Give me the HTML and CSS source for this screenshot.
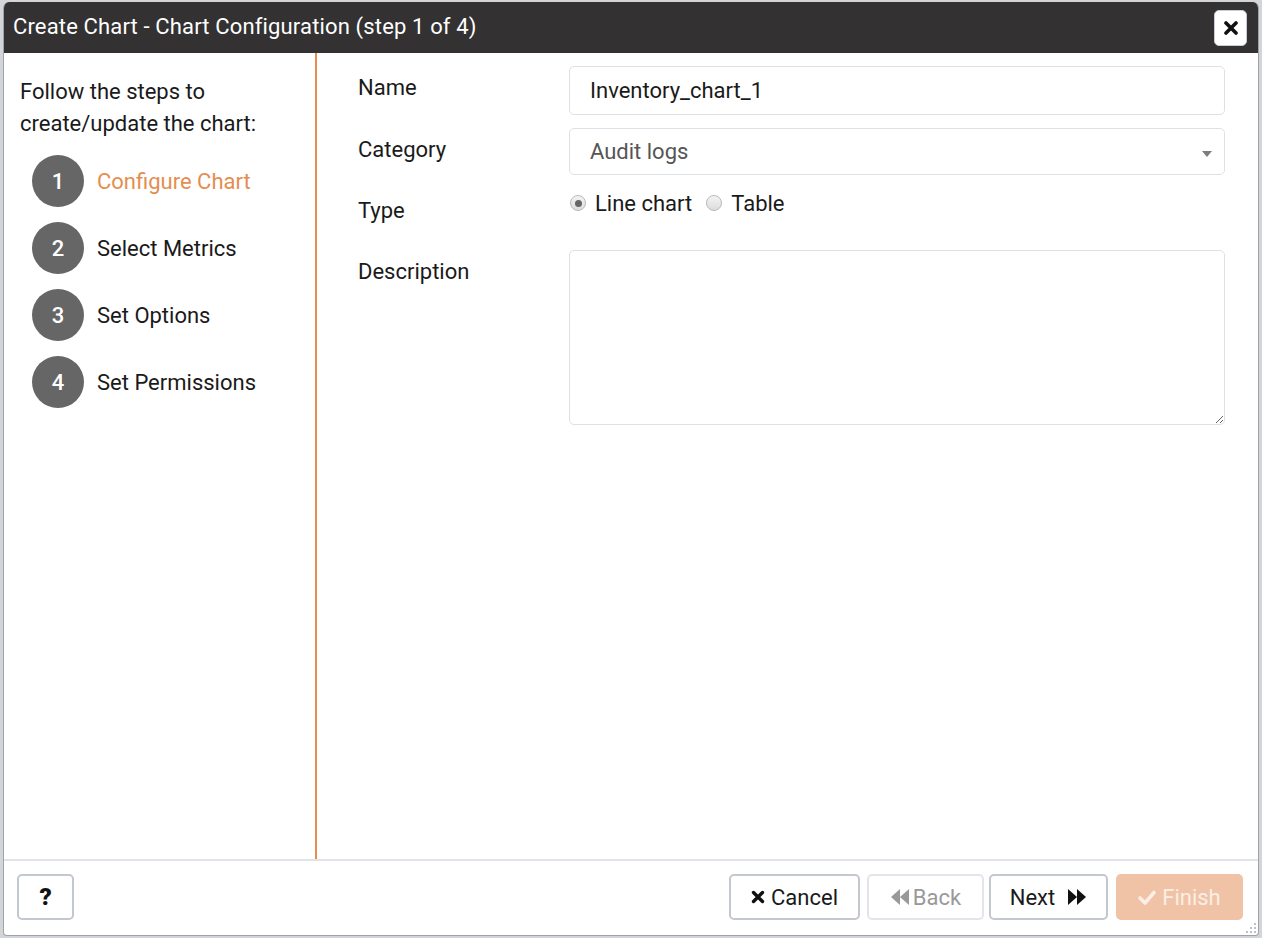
FILE: index.html
```html
<!DOCTYPE html>
<html>
<head>
<meta charset="utf-8">
<title>Create Chart</title>
<link rel="stylesheet" href="styles.css">
</head>
<body>
<div class="dialog">
  <div class="dlg-header">
    <span class="dlg-title">Create Chart - Chart Configuration (step 1 of 4)</span>
    <button class="close-btn" aria-label="Close">
      <svg width="14" height="14" viewBox="0 0 14 14"><path d="M2 2 L12 12 M12 2 L2 12" stroke="#111" stroke-width="3.6" stroke-linecap="round"/></svg>
    </button>
  </div>
  <div class="dlg-main">
    <div class="steps-panel">
      <p class="steps-intro">Follow the steps to create/update the chart:</p>
      <ul class="steps">
        <li class="step active"><span class="step-num">1</span><span class="step-label">Configure Chart</span></li>
        <li class="step"><span class="step-num">2</span><span class="step-label">Select Metrics</span></li>
        <li class="step"><span class="step-num">3</span><span class="step-label">Set Options</span></li>
        <li class="step"><span class="step-num">4</span><span class="step-label">Set Permissions</span></li>
      </ul>
    </div>
    <div class="form-panel">
      <div class="form-grid">
        <label class="f-label">Name</label>
        <div class="f-ctrl"><div class="input">Inventory_chart_1</div></div>

        <label class="f-label">Category</label>
        <div class="f-ctrl"><div class="input select"><span>Audit logs</span><span class="caret"></span></div></div>

        <label class="f-label">Type</label>
        <div class="f-ctrl radios">
          <span class="radio checked"></span><span class="radio-text">Line chart</span>
          <span class="radio"></span><span class="radio-text">Table</span>
        </div>

        <label class="f-label">Description</label>
        <div class="f-ctrl"><textarea class="textarea"></textarea></div>
      </div>
    </div>
  </div>
  <div class="dlg-footer">
    <button class="btn btn-help">?</button>
    <div class="footer-right">
      <button class="btn btn-cancel">
        <svg width="14" height="14" viewBox="0 0 14 14"><path d="M2.5 2.5 L11.5 11.5 M11.5 2.5 L2.5 11.5" stroke="#111" stroke-width="3.4" stroke-linecap="round"/></svg>
        Cancel</button>
      <button class="btn btn-back">
        <svg width="20" height="18" viewBox="0 0 20 18"><path d="M10 1 L1 9 L10 17 Z M19 1 L10 9 L19 17 Z" fill="#999"/></svg>
        Back</button>
      <button class="btn btn-next">Next
        <svg width="20" height="18" viewBox="0 0 20 18"><path d="M1 1 L10 9 L1 17 Z M10 1 L19 9 L10 17 Z" fill="#111"/></svg>
      </button>
      <button class="btn btn-finish">
        <svg width="18" height="15" viewBox="0 0 18 15"><path d="M2 8 L7 13 L16 2.5" stroke="#fbeee5" stroke-width="3.6" fill="none" stroke-linecap="round" stroke-linejoin="round"/></svg>
        Finish</button>
    </div>
    <svg class="grip" width="12" height="12" viewBox="0 0 12 12">
      <g fill="#a9acb2"><circle cx="10" cy="2" r="1"/><circle cx="6" cy="6" r="1"/><circle cx="10" cy="6" r="1"/><circle cx="2" cy="10" r="1"/><circle cx="6" cy="10" r="1"/><circle cx="10" cy="10" r="1"/></g>
    </svg>
  </div>
</div>
</body>
</html>
```
FILE: styles.css
```css
* { box-sizing: border-box; }
html, body { margin: 0; padding: 0; }
body {
  width: 1262px;
  height: 938px;
  background: #d3d5d9;
  font-family: Roboto, "Liberation Sans", Arial, sans-serif;
  color: #1a1a1a;
  overflow: hidden;
}
.dialog {
  position: relative;
  margin: 2px 0 0 3px;
  width: 1256px;
  height: 934px;
  background: #fff;
  border: 1px solid #9ea2a9;
  border-top: none;
  border-radius: 6px 6px 4px 4px;
  display: flex;
  flex-direction: column;
  overflow: hidden;
}
.dlg-header {
  height: 51px;
  flex: 0 0 51px;
  background: #333132;
  display: flex;
  align-items: center;
  justify-content: space-between;
  padding: 0 11px 0 9px;
}
.dlg-title {
  color: #fff;
  font-size: 22px;
  letter-spacing: 0.15px;
  line-height: 28px;
  margin-top: -2px;
}
.close-btn {
  width: 33px;
  height: 36px;
  background: #fff;
  border: 1px solid #c8ccd4;
  border-radius: 5px;
  padding: 0;
  display: flex;
  align-items: center;
  justify-content: center;
  margin-top: 1px;
}
.dlg-main {
  flex: 1;
  display: flex;
  min-height: 0;
}
.steps-panel {
  width: 313px;
  flex: 0 0 313px;
  border-right: 2px solid #e58e4f;
  padding: 23px 0 0 16px;
}
.steps-intro {
  margin: 0;
  font-size: 22px;
  line-height: 32px;
  color: #1a1a1a;
}
.steps {
  list-style: none;
  margin: 15px 0 0 12px;
  padding: 0;
  display: flex;
  flex-direction: column;
  gap: 15px;
}
.step {
  display: flex;
  align-items: center;
  gap: 13px;
  height: 52px;
}
.step-num {
  width: 52px;
  height: 52px;
  border-radius: 50%;
  background: #666;
  color: #fff;
  font-size: 22px;
  font-weight: 500;
  display: flex;
  align-items: center;
  justify-content: center;
}
.step-label {
  font-size: 22px;
  color: #1a1a1a;
}
.step.active .step-label { color: #e58e4f; }
.form-panel {
  flex: 1;
  padding: 13px 33px 0 41px;
}
.form-grid {
  display: grid;
  grid-template-columns: 211px 1fr;
  grid-template-rows: 49px 48px 48px 175px;
  row-gap: 13px;
}
.f-label {
  font-size: 22px;
  line-height: 28px;
  padding-top: 8px;
  color: #1a1a1a;
}
.input {
  height: 49px;
  border: 1px solid #dde0e6;
  border-radius: 5px;
  padding: 0 20px 0 20px;
  font-size: 22px;
  display: flex;
  align-items: center;
  color: #1a1a1a;
}
.select { justify-content: space-between; color: #555; height: 47px; }
.caret {
  width: 0;
  height: 0;
  border-left: 5.5px solid transparent;
  border-right: 5.5px solid transparent;
  border-top: 6px solid #7d7d7d;
  margin-right: -8px;
  margin-top: 4px;
}
.radios {
  display: flex;
  align-items: center;
  height: 28px;
  font-size: 22px;
}
.radio {
  width: 16px;
  height: 16px;
  border-radius: 50%;
  border: 1px solid #b9b9b9;
  background: linear-gradient(#f4f4f4, #dcdcdc);
  margin: 0 9px 0 1px;
  position: relative;
  flex: 0 0 16px;
}
.radio.checked::after {
  content: "";
  position: absolute;
  left: 3.5px;
  top: 3.5px;
  width: 7px;
  height: 7px;
  border-radius: 50%;
  background: #666;
}
.radio-text { margin-right: 13px; color: #1a1a1a; }
.textarea {
  display: block;
  width: 100%;
  height: 175px;
  border: 1px solid #dde0e6;
  border-radius: 5px;
  font-family: inherit;
  font-size: 22px;
  padding: 10px 20px;
  margin: 0;
  outline: none;
}
.dlg-footer {
  position: relative;
  flex: 0 0 76px;
  border-top: 2px solid #e1e3e8;
  display: flex;
  justify-content: space-between;
  align-items: flex-start;
  padding: 13px 15px 0 13px;
}
.footer-right {
  display: flex;
  gap: 7px;
}
.btn {
  height: 46px;
  border: 2px solid #c3c7d0;
  border-radius: 5px;
  background: #fff;
  font-family: inherit;
  font-size: 22px;
  color: #1a1a1a;
  display: flex;
  align-items: center;
  justify-content: center;
  gap: 6px;
  padding: 0;
}
.btn-help { width: 57px; font-weight: 900; font-size: 24px; color: #111; }
.btn-cancel { width: 131px; }
.btn-back { width: 117px; color: #999; border-color: #e3e5ea; gap: 3px; }
.btn-next { width: 119px; gap: 12px; margin-left: -2px; }
.btn-finish {
  width: 127px;
  background: #f0c3a6;
  border-color: #f0c3a6;
  color: #fbeee5;
  margin-left: 1px;
}
.grip {
  position: absolute;
  right: 1px;
  bottom: 1px;
}
```
